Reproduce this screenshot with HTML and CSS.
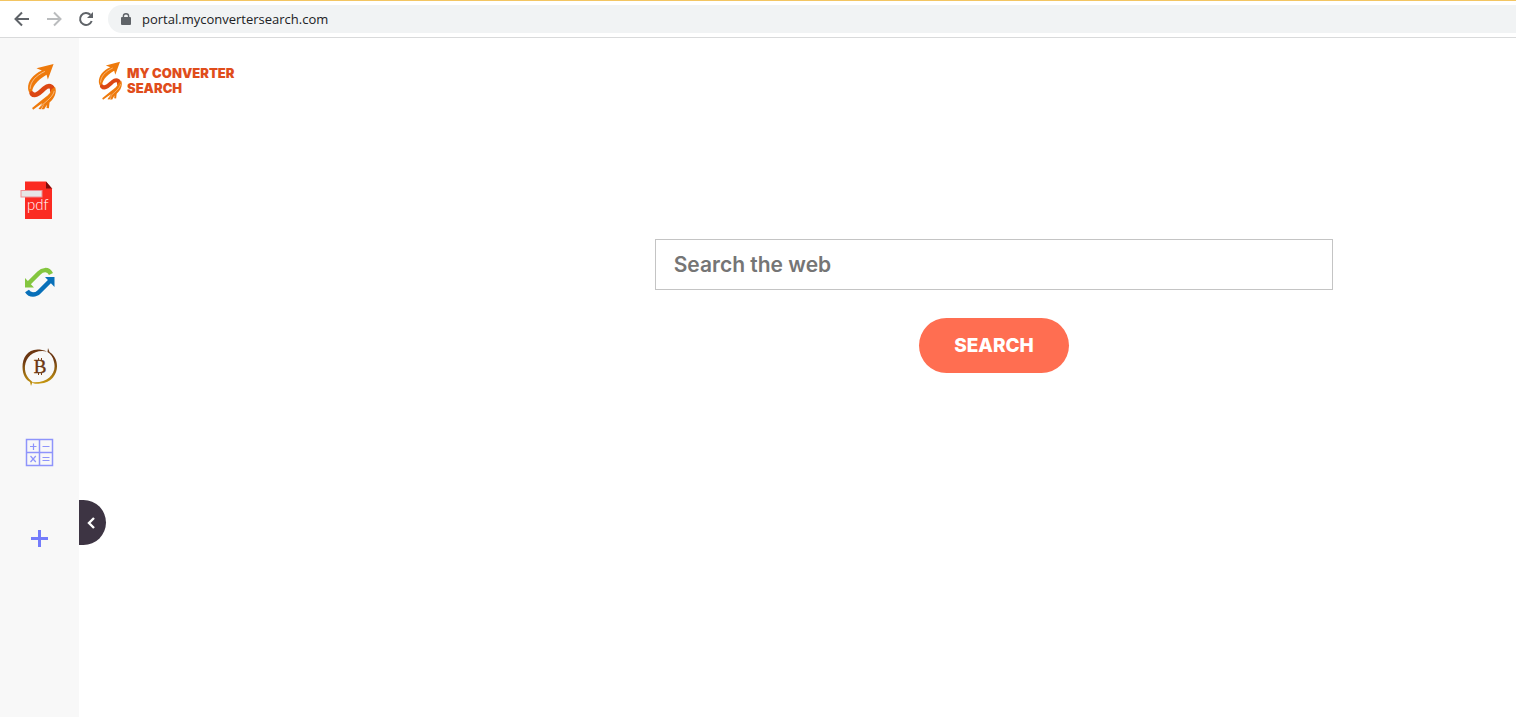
FILE: index.html
```html
<!DOCTYPE html>
<html lang="en">
<head>
  <meta charset="UTF-8" />
  <title>My Converter Search</title>
  <link rel="stylesheet" href="styles.css">
</head>
<body>

  <svg class="sprite" aria-hidden="true">
    <symbol id="swoosh" viewBox="50 35 86 140">
      <path fill="#ee7a0c" d="M129 38 L78 51 L94 57 C68 69 52 88 53 111 C54 122 60 129 66 129 C61 108 79 87 108 70 L112 84 Z" />
      <path fill="none" stroke="#fbe3cc" stroke-width="2" d="M103 60 C76 73 60 90 59 112" />
      <path fill="none" stroke="#dc4713" stroke-width="14" stroke-linecap="round" d="M64 126 C75 138 88 122 102 110 C114 100 127 103 125 117" />
      <path fill="#ee7a0c" d="M133 106 C140 121 132 140 117 153 L115 170 L108 169 L109 159 L101 173 L93 173 L102 156 L91 173 L84 172 L96 154 L68 174 L65 169 L97 143 C111 133 120 126 122 115 Z" />
      <path fill="none" stroke="#fbd8b5" stroke-width="2" d="M131 118 C128 135 108 148 90 165" />
    </symbol>
  </svg>

  <div class="toolbar">
    <button class="nav-btn" aria-label="Back">
      <svg width="16" height="16" viewBox="0 0 16 16" fill="none" stroke="#5f6368" stroke-width="2"><path d="M15 8H2M8 1.5L1.5 8L8 14.5" /></svg>
    </button>
    <button class="nav-btn" aria-label="Forward">
      <svg width="16" height="16" viewBox="0 0 16 16" fill="none" stroke="#babcbe" stroke-width="2"><path d="M1 8H14M8 1.5L14.5 8L8 14.5" /></svg>
    </button>
    <button class="nav-btn" aria-label="Reload">
      <svg width="16" height="16" viewBox="0 0 16 16"><path fill="none" stroke="#5f6368" stroke-width="2" d="M13.7 10A6 6 0 1 1 12.4 3.8" /><path fill="#5f6368" d="M15 1V7H9Z" /></svg>
    </button>
    <div class="address">
      <svg width="10" height="12" viewBox="0 0 10 12"><rect y="4" width="10" height="8" rx="1" fill="#5f6368" /><path fill="none" stroke="#5f6368" stroke-width="1.4" d="M2.4 5V3A2.6 2.3 0 0 1 7.6 3V5" /></svg>
      <input type="text" class="url" aria-label="Address" value="portal.myconvertersearch.com" />
    </div>
  </div>

  <div class="page">
    <nav class="sidebar">
      <a href="#" class="side-logo" aria-label="Home"><svg width="29" height="47"><use href="#swoosh" /></svg></a>

      <a href="#" class="side-link" aria-label="PDF">
        <svg width="39" height="40" viewBox="0 0 39 40">
          <path fill="#fb2b22" d="M5 1.500H26L32 8.500V39H5Z" />
          <path fill="#7b0d0d" d="M26 1.500L32 8.500H26Z" />
          <rect x="1" y="10.500" width="21" height="6.500" fill="#e6e6e6" stroke="#ee8f94" />
          <text x="7" y="30" class="pdf-text">pdf</text>
        </svg>
      </a>
      <a href="#" class="side-link" aria-label="Convert">
        <svg width="39" height="40" viewBox="0 0 39 40">
          <path fill="none" stroke="#84c63f" stroke-width="4.500" d="M9 19L19 9C22 6 28 4 31 10" />
          <path fill="#84c63f" d="M5 14L14 23.500H5Z" />
          <path fill="none" stroke="#0870b9" stroke-width="4.500" d="M7 27C10 32 16 31 19 28L30 17" />
          <path fill="#0870b9" d="M25 13H34.500V23Z" />
        </svg>
      </a>
      <a href="#" class="side-link" aria-label="Bitcoin">
        <svg width="39" height="40" viewBox="0 0 39 40">
          <defs>
            <linearGradient id="gold" x1="0" y1="0" x2="0" y2="1">
              <stop offset="0.300" stop-color="#6b3712" />
              <stop offset="1" stop-color="#c99a10" />
            </linearGradient>
          </defs>
          <path fill="url(#gold)" d="M27 3.500C10-3 2.500 8 2.500 19C2.500 27 6 32 10 34L11 38L12.500 34C6.500 29 4.500 24 5 18C6 8 15 1 27 3.500Z" />
          <path fill="url(#gold)" d="M28 0L29.500 4C42 12 39 34 20 35.500C17 36 14 36 11 34C28 36 37 25 34 14C33 9 31 6 27.500 4Z" />
          <text x="20" y="25" class="coin-text">B</text>
          <path stroke="#7b4218" d="M18.500 10V13M21.500 10V13M18.500 24V27M21.500 24V27" />
        </svg>
      </a>
      <a href="#" class="side-link" aria-label="Calculator">
        <svg width="39" height="40" viewBox="0 0 39 40" fill="none" stroke="#8e94fb">
          <path stroke-width="1.500" d="M6.500 7.500H32.500V33.500H6.500ZM19.500 7.500V33.500M6.500 20.500H32.500" />
          <path stroke-width="1.200" d="M10 14.500H16.500M13.500 11.500V18M22.500 14.500H29.500M10.500 24L15.800 30M15.800 24L10.500 30M22.500 25.500H29.500M22.500 28.500H29.500" />
        </svg>
      </a>
      <a href="#" class="side-link" aria-label="Add">
        <svg width="39" height="40" viewBox="0 0 39 40" stroke="#747cfb" stroke-width="3"><path d="M11 22.500H28M19.500 14V31" /></svg>
      </a>
    </nav>

    <main class="content">
      <a href="#" class="brand">
        <svg width="24" height="39"><use href="#swoosh" /></svg>
        <span>MY CONVERTER<br>SEARCH</span>
      </a>

      <form class="search">
        <input type="text" class="search-input" placeholder="Search the web" aria-label="Search the web" />
        <button type="submit" class="search-btn">SEARCH</button>
      </form>

      <button class="toggle" aria-label="Collapse sidebar">
        <svg width="8" height="12" viewBox="0 0 8 12" fill="none" stroke="#fff" stroke-width="2.400"><path d="M7 1L2 6L7 11" /></svg>
      </button>
    </main>
  </div>

</body>
</html>
```

FILE: styles.css
```css
* { box-sizing: border-box; }
body {
  margin: 0;
  min-height: 100vh;
  display: flex;
  flex-direction: column;
  background: #fff;
  font-family: Inter, 'Open Sans', sans-serif;
}
button {
  border: none;
  padding: 0;
  cursor: pointer;
}
svg { display: block; }
.sprite {
  position: absolute;
  width: 0;
  height: 0;
}

/* browser bar */
.toolbar {
  display: flex;
  align-items: center;
  gap: 16px;
  height: 38px;
  padding-left: 14px;
  border-top: 1px solid #f3c562;
  border-bottom: 1px solid #d9dadb;
}
.nav-btn {
  width: 16px;
  background: none;
}
.address {
  flex: 1;
  display: flex;
  align-items: center;
  gap: 11px;
  height: 28px;
  margin-left: -2px;
  padding-left: 13px;
  background: #f1f3f4;
  border-radius: 14px 0 0 14px;
}
.url {
  flex: 1;
  padding: 0;
  border: none;
  outline: none;
  background: none;
  color: #202124;
  font: 13px 'Open Sans', sans-serif;
}

.page {
  flex: 1;
  display: flex;
}

/* left menu */
.sidebar {
  width: 79px;
  padding-bottom: 40px;
  background: #f8f8f8;
}
.side-logo, .side-link {
  display: flex;
  align-items: center;
  justify-content: center;
}
.side-logo {
  height: 96px;
  margin-bottom: 24px;
  padding-left: 3px;
}
.side-link { height: 84px; }
.pdf-text {
  font: 300 15px Lato, sans-serif;
  fill: #fff;
}
.coin-text {
  font: 19px 'Liberation Serif', serif;
  text-anchor: middle;
  fill: #6b3712;
  stroke: #6b3712;
  stroke-width: 0.4px;
}

/* main area */
.content {
  position: relative;
  flex: 1;
  padding: 23px 0 0 19px;
}
.brand {
  display: flex;
  width: fit-content;
  gap: 5px;
  color: #e04d1b;
  font-size: 13px;
  font-weight: 900;
  line-height: 15px;
  text-decoration: none;
}
.brand span { padding-top: 5px; }
.search {
  display: flex;
  flex-direction: column;
  align-items: center;
  gap: 28px;
  margin: 139px 0 0 374px;
}
.search-input {
  width: 65%;
  height: 51px;
  padding: 0 18px;
  border: 1px solid #c4c4c4;
  font: 600 21px Inter, 'Open Sans', sans-serif;
}
.search-input::placeholder { color: #757575; }
.search-btn {
  height: 55px;
  padding: 0 35px;
  border-radius: 28px;
  background: #ff6e51;
  color: #fff;
  font: 800 19px Inter, 'Open Sans', sans-serif;
}
.toggle {
  position: absolute;
  top: 462px;
  left: 0;
  display: flex;
  align-items: center;
  width: 27px;
  height: 45px;
  padding-left: 8px;
  border-radius: 0 23px 23px 0;
  background: #3d3443;
}
```
